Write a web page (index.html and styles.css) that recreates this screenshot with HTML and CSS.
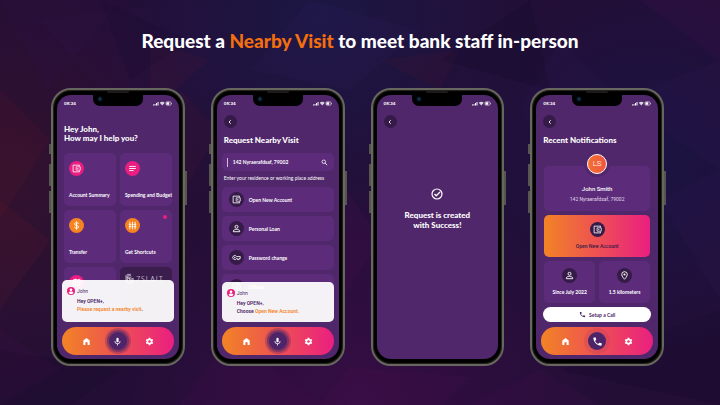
FILE: index.html
```html
<!DOCTYPE html>
<html lang="en">
<head>
<meta charset="utf-8">
<title>Request a Nearby Visit</title>
<link rel="stylesheet" href="styles.css">
</head>
<body>
<svg class="symbols" aria-hidden="true">
  <symbol id="wallet" viewBox="0 0 24 24"><path d="M20 6V3H3v18h17v-3" fill="none" stroke="currentColor" stroke-width="2.200"/><path d="M11 7.500h11v9H11z" fill="none" stroke="currentColor" stroke-width="2"/><circle cx="15.500" cy="12" r="1.600" fill="currentColor"/></symbol>
  <symbol id="lines" viewBox="0 0 24 24"><path d="M3 6.500h18M3 12h18M3 17.500h12" fill="none" stroke="currentColor" stroke-width="2.400"/></symbol>
  <symbol id="dollar" viewBox="0 0 24 24"><path d="M17.500 8C17 5.500 15 4.500 12 4.500S6.800 6 6.800 8.300c0 5 10.700 2.400 10.700 7.400 0 2.300-2.300 3.800-5.500 3.800S6.800 18 6.300 15.500M12 1v22" fill="none" stroke="currentColor" stroke-width="2.600"/></symbol>
  <symbol id="sliders" viewBox="0 0 24 24"><path d="M5 2v20M12 2v20M19 2v20M2 9h6M9 9h6M16 9h6M2 15h6M9 15h6M16 15h6" fill="none" stroke="currentColor" stroke-width="2.400"/></symbol>
  <symbol id="map" viewBox="0 0 24 24"><path d="M3 5l6-2 6 2 6-2v16l-6 2-6-2-6 2zM9 3v16M15 5v16" fill="none" stroke="currentColor" stroke-width="2.400"/></symbol>
  <symbol id="person" viewBox="0 0 24 24"><circle cx="12" cy="7.500" r="4" fill="none" stroke="currentColor" stroke-width="2.400"/><path d="M3.500 20.500v-2c0-2.500 4.500-4 8.500-4s8.500 1.500 8.500 4v2z" fill="none" stroke="currentColor" stroke-width="2.400"/></symbol>
  <symbol id="key" viewBox="0 0 24 24"><path d="M12 9.500A5.300 5.300 0 1 0 12 14.500h2v3h5v-3h3v-5z" fill="none" stroke="currentColor" stroke-width="2.200"/><circle cx="7.500" cy="12" r="1.800" fill="currentColor"/></symbol>
  <symbol id="pin" viewBox="0 0 24 24"><path d="M12 22S4.500 14.500 4.500 9.300a7.500 7.500 0 0 1 15 0C19.500 14.500 12 22 12 22z" fill="none" stroke="currentColor" stroke-width="2.400"/><circle cx="12" cy="9.300" r="2.800" fill="currentColor"/></symbol>
  <symbol id="home" viewBox="0 0 24 24"><path d="M12 2.500L3.500 9.500V21.500H9V14h6v7.500h5.500V9.500z" fill="currentColor"/></symbol>
  <symbol id="mic" viewBox="0 0 24 24"><rect x="9" y="2" width="6" height="12" rx="3" fill="currentColor"/><path d="M5 11a7 7 0 0 0 14 0M12 18v4.500" fill="none" stroke="currentColor" stroke-width="2.200"/></symbol>
  <symbol id="phone" viewBox="0 0 24 24"><path d="M20 15.500c-1.250 0-2.450-.2-3.570-.57-.35-.11-.74-.03-1.020.24l-2.200 2.200a15.050 15.050 0 0 1-6.590-6.580l2.200-2.210c.28-.27.36-.66.250-1.010A11.400 11.400 0 0 1 8.500 4c0-.55-.45-1-1-1H4c-.55 0-1 .45-1 1 0 9.390 7.610 17 17 17 .55 0 1-.45 1-1v-3.500c0-.55-.45-1-1-1z" fill="currentColor"/></symbol>
  <symbol id="gear" viewBox="0 0 24 24"><path fill-rule="evenodd" d="M19.430 12.980c.04-.32.070-.64.070-.98s-.03-.66-.07-.98l2.110-1.650c.19-.15.240-.42.120-.64l-2-3.460c-.12-.22-.39-.3-.61-.22l-2.490 1c-.52-.4-1.080-.73-1.690-.98l-.38-2.650A.488.488 0 0 0 14 2h-4c-.25 0-.46.180-.49.420l-.38 2.650c-.61.250-1.170.590-1.690.980l-2.490-1c-.23-.09-.49 0-.61.220l-2 3.460c-.13.220-.07.490.120.640l2.110 1.650c-.04.320-.07.650-.07.980s.03.660.07.980l-2.110 1.650c-.19.150-.24.420-.12.640l2 3.460c.12.220.39.300.61.220l2.490-1c.52.400 1.080.730 1.690.980l.38 2.650c.03.240.24.420.49.420h4c.25 0 .46-.18.490-.42l.38-2.650c.61-.25 1.170-.59 1.690-.98l2.490 1c.23.090.49 0 .61-.22l2-3.460c.12-.22.070-.49-.12-.64zM12 15.500a3.500 3.500 0 1 1 0-7 3.500 3.500 0 0 1 0 7z" fill="currentColor"/></symbol>
  <symbol id="search" viewBox="0 0 24 24"><circle cx="9.500" cy="9.500" r="6" fill="none" stroke="currentColor" stroke-width="2.600"/><path d="M14 14l7 7" stroke="currentColor" stroke-width="3"/></symbol>
  <symbol id="back" viewBox="0 0 24 24"><path d="M15 5l-7 7 7 7" fill="none" stroke="currentColor" stroke-width="3.600"/></symbol>
  <symbol id="user" viewBox="0 0 24 24"><circle cx="12" cy="12" r="12" fill="#e91e80"/><circle cx="12" cy="8.500" r="4" fill="#fff"/><path d="M4.500 17.500c1-3 4.500-4 7.500-4s6.500 1 7.500 4a9 9 0 0 1-15 0z" fill="#fff"/></symbol>
  <symbol id="check" viewBox="0 0 24 24"><circle cx="12" cy="12" r="10" fill="none" stroke="currentColor" stroke-width="2.400"/><path d="M7 12l3.500 3.500L18 8" fill="none" stroke="currentColor" stroke-width="2.600"/></symbol>
  <symbol id="signals" viewBox="0 0 38 10"><path d="M0 7h2v2H0zM3 6h2v3H3zM6 4h2v5H6zM9 2h2v7H9z" fill="currentColor"/><path d="M13.500 3.500Q18.500-.5 23.500 3.500L18.500 9z" fill="currentColor" opacity=".8"/><rect x="26" y="1.500" width="10" height="7" rx="2" fill="none" stroke="currentColor"/><rect x="27" y="2.500" width="5.500" height="5" fill="currentColor"/><path d="M37 4h1v2h-1z" fill="currentColor"/></symbol>
  <symbol id="hand" viewBox="0 0 24 24"><path d="M4 3h9M3 7l8-3 2 4M2 11l7-3v4l5-3M3 15l6-4 3 6M2 4v14l8 4 6-4M9 14l9-2v6l-6 4M16 12l-2 9M5 7v13" fill="none" stroke="currentColor" stroke-width="1.200"/></symbol>
</svg>

<svg class="facets" viewBox="0 0 720 405" preserveAspectRatio="none" aria-hidden="true">
  <g fill="#4a2c7a">
    <path d="M0 0h120L48 90z" opacity=".08"/><path d="M40 20l150-20 60 70-110 60z" opacity=".07"/>
    <path d="M250 70L310 0l110 30-70 60z" opacity=".12"/><path d="M620 100l100-40v110z" opacity=".12"/>
    <path d="M560 40l60 60-40 90-60-80z" opacity=".1"/><path d="M660 200l60-30v130z" opacity=".12"/>
  </g>
  <g fill="#7a1f2e">
    <path d="M0 90l50 50-50 80z" opacity=".16"/><path d="M150 40l60 20-60 50z" opacity=".14"/>
    <path d="M0 200l50 40-50 70z" opacity=".18"/><path d="M380 60l80-10-20 40z" opacity=".14"/>
    <path d="M180 90l40 40-36 60z" opacity=".12"/>
  </g>
  <g fill="#6a1468">
    <path d="M180 405l50-70 90 70z" opacity=".13"/><path d="M320 405l30-38 120 10-30 28z" opacity=".13"/>
    <path d="M0 330l60 40-60 35z" opacity=".12"/><path d="M470 405l70-36 60 36z" opacity=".12"/>
    <path d="M640 0h80v60z" opacity=".15"/><path d="M340 180l40 60-38 60z" opacity=".15"/>
  </g>
  <g fill="#060418">
    <path d="M0 350l120 20-50 35H0z" opacity=".14"/><path d="M440 60l90-60 20 90z" opacity=".18"/>
    <path d="M560 370l160-60v95z" opacity=".15"/><path d="M100 0l90 40-60 40z" opacity=".12"/>
  </g>
</svg>

<main class="page">
  <h1 class="title">Request a <em>Nearby Visit</em> to meet bank staff in-person</h1>
  <div class="phones">

    <section class="phone" aria-label="Home">
      <div class="notch"></div>
      <div class="screen">
        <div class="status"><span>08:34</span><svg><use href="#signals"/></svg></div>
        <div class="content">
          <h2 class="heading greeting">Hey John,<br>How may I help you?</h2>
          <div class="tiles">
            <a class="tile" href="#"><span class="disc pink"><svg><use href="#wallet"/></svg></span>Account Summary</a>
            <a class="tile" href="#"><span class="disc pink"><svg><use href="#lines"/></svg></span>Spending and Budget</a>
            <a class="tile" href="#"><span class="disc orange"><svg><use href="#dollar"/></svg></span>Transfer</a>
            <a class="tile" href="#"><span class="disc orange"><svg><use href="#sliders"/></svg></span>Get Shortcuts<i class="dot"></i></a>
            <a class="tile" href="#" aria-label="Map"><span class="disc pink"><svg><use href="#map"/></svg></span></a>
            <div class="tile partner"><span class="brand"><svg><use href="#hand"/></svg>7SLAIT</span></div>
          </div>
        </div>
        <div class="dock">
          <div class="chat tall">
            <div class="who"><svg><use href="#user"/></svg>John</div>
            <p>Hey OPEN+,<br><b>Please request a nearby visit</b>.</p>
          </div>
          <nav class="bar">
            <a href="#" aria-label="Home"><svg><use href="#home"/></svg></a>
            <button class="talk" aria-label="Speak"><svg><use href="#mic"/></svg></button>
            <a href="#" aria-label="Settings"><svg><use href="#gear"/></svg></a>
          </nav>
        </div>
      </div>
    </section>

    <section class="phone" aria-label="Request Nearby Visit">
      <div class="notch"></div>
      <div class="screen">
        <div class="status"><span>08:34</span><svg><use href="#signals"/></svg></div>
        <div class="content">
          <button class="back" aria-label="Back"><svg><use href="#back"/></svg></button>
          <h2 class="heading">Request Nearby Visit</h2>
          <div class="search">
            <input id="address" type="text" value="142 Nyraerafdsaf, 79002">
            <svg><use href="#search"/></svg>
          </div>
          <label class="hint" for="address">Enter your residence or working place address</label>
          <div class="list">
            <a class="item" href="#"><span class="disc"><svg><use href="#wallet"/></svg></span>Open New Account</a>
            <a class="item" href="#"><span class="disc"><svg><use href="#person"/></svg></span>Personal Loan</a>
            <a class="item" href="#"><span class="disc"><svg><use href="#key"/></svg></span>Password change</a>
            <a class="item" href="#"><span class="disc"><svg><use href="#wallet"/></svg></span>Others</a>
          </div>
        </div>
        <div class="dock">
          <div class="chat">
            <div class="who"><svg><use href="#user"/></svg>John</div>
            <p>Hey OPEN+,<br>Choose <b>Open New Account.</b></p>
          </div>
          <nav class="bar">
            <a href="#" aria-label="Home"><svg><use href="#home"/></svg></a>
            <button class="talk" aria-label="Speak"><svg><use href="#mic"/></svg></button>
            <a href="#" aria-label="Settings"><svg><use href="#gear"/></svg></a>
          </nav>
        </div>
      </div>
    </section>

    <section class="phone" aria-label="Request created">
      <div class="notch"></div>
      <div class="screen">
        <div class="status"><span>08:34</span><svg><use href="#signals"/></svg></div>
        <div class="content">
          <button class="back" aria-label="Back"><svg><use href="#back"/></svg></button>
          <div class="success">
            <svg><use href="#check"/></svg>
            <p>Request is created<br>with Success!</p>
          </div>
        </div>
      </div>
    </section>

    <section class="phone" aria-label="Recent Notifications">
      <div class="notch"></div>
      <div class="screen">
        <div class="status"><span>08:34</span><svg><use href="#signals"/></svg></div>
        <div class="content">
          <button class="back" aria-label="Back"><svg><use href="#back"/></svg></button>
          <h2 class="heading">Recent Notifications</h2>
          <div class="details">
            <div class="profile">
              <span class="avatar">LS</span>
              <strong>John Smith</strong>
              <span class="place">142 Nyraerafdsaf, 79002</span>
            </div>
            <a class="fact feature" href="#"><span class="disc"><svg><use href="#wallet"/></svg></span>Open New Account</a>
            <div class="fact"><span class="disc"><svg><use href="#person"/></svg></span>Since July 2022</div>
            <div class="fact"><span class="disc"><svg><use href="#pin"/></svg></span>1.5 kilometers</div>
          </div>
        </div>
        <div class="dock">
          <button class="call"><svg><use href="#phone"/></svg>Setup a Call</button>
          <nav class="bar">
            <a href="#" aria-label="Home"><svg><use href="#home"/></svg></a>
            <button class="talk soft" aria-label="Call"><svg><use href="#phone"/></svg></button>
            <a href="#" aria-label="Settings"><svg><use href="#gear"/></svg></a>
          </nav>
        </div>
      </div>
    </section>

  </div>
</main>
</body>
</html>
```
FILE: styles.css
```css
* { box-sizing: border-box; }

body {
  margin: 0;
  min-height: 100vh;
  position: relative;
  overflow: hidden;
  color: #fff;
  font-family: Lato, Roboto, sans-serif;
  background:
    radial-gradient(circle at 45% 5%, rgba(27, 24, 70, .9), transparent 40%),
    radial-gradient(circle at 90% 40%, rgba(26, 20, 68, .9), transparent 30%),
    radial-gradient(circle at 50% 100%, rgba(56, 13, 70, .9), transparent 45%),
    radial-gradient(circle at 0% 45%, rgba(54, 18, 44, .8), transparent 30%),
    #230e36;
}

h1, h2, p { margin: 0; }
a { color: inherit; text-decoration: none; }
button { border: 0; padding: 0; font: inherit; color: inherit; }
svg { display: block; }

.symbols { position: absolute; width: 0; height: 0; }
.facets { position: absolute; inset: 0; width: 100%; height: 100%; opacity: .7; }

.page {
  position: relative;
  padding: 29px 56px 38px 51px;
}

.title {
  font: 900 19px/24px Lato, sans-serif;
  text-align: center;
  white-space: nowrap;
  margin-bottom: 35px;
  padding-left: 5px;
}
.title em { font-style: normal; color: #f36f0e; }

.phones {
  display: grid;
  grid-template-columns: repeat(4, minmax(0, 1fr));
  gap: 26px;
}

.phone {
  position: relative;
  display: grid;
  grid-template: minmax(0, 1fr) / minmax(0, 1fr);
  aspect-ratio: 134 / 279;
  min-height: 0;
  padding: 5px 4px;
  border: 2px solid #67665f;
  border-radius: 20px;
  background: #000;
  box-shadow: inset 0 0 1px 1px #26251f;
}
.phone::before, .phone::after {
  content: "";
  position: absolute;
  width: 2px;
}
.phone::before {
  left: -4px;
  top: 54px;
  height: 69px;
  background: linear-gradient(#56554f 0 10px, transparent 10px 20px, #56554f 20px 42px, transparent 42px 47px, #56554f 47px);
}
.phone::after {
  right: -4px;
  top: 81px;
  height: 34px;
  background: #56554f;
}

.notch {
  position: absolute;
  z-index: 2;
  top: 4px;
  left: 50%;
  width: 50px;
  height: 12px;
  transform: translateX(-50%);
  border-radius: 0 0 7px 7px;
  background:
    radial-gradient(circle at 7px 5px, #0d3358 0 1px, #04101c 2px, transparent 3px),
    #000;
}
.notch::before {
  content: "";
  position: absolute;
  left: 14px;
  right: 14px;
  top: -3px;
  height: 2px;
  border-radius: 1px;
  background: #1b1a1c;
}

.screen {
  position: relative;
  display: flex;
  flex-direction: column;
  overflow: hidden;
  border-radius: 14px;
  background: #50276a;
}

.status {
  display: flex;
  justify-content: space-between;
  align-items: center;
  flex: none;
  height: 16px;
  padding: 0 7px;
  font: 700 4px/5px Inter, sans-serif;
}
.status svg { width: 19px; height: 5px; }

.content {
  flex: 1;
  min-height: 0;
  padding: 4px 5px 0;
}

.heading {
  margin: 8px 2px 0;
  font: 900 8px/9px Lato, sans-serif;
  white-space: nowrap;
}
.greeting { margin-top: 10px; }

.tiles {
  display: grid;
  grid-template-columns: 1fr 1fr;
  grid-auto-rows: 53px;
  gap: 4px;
  margin: 10px 2px 0;
}
.tile {
  position: relative;
  display: flex;
  flex-direction: column;
  gap: 16px;
  min-width: 0;
  padding: 8px 5px;
  border-radius: 5px;
  background: #5c2c7b;
  font-size: 5px;
  line-height: 6px;
  font-weight: 700;
  white-space: nowrap;
}
.partner { background: #3b1d4e; }
.brand {
  display: flex;
  align-items: center;
  font: 300 7px/8px Lato, sans-serif;
  letter-spacing: 1px;
  margin-top: -2px;
}
.brand svg { width: 11px; height: 11px; flex: none; }
.dot {
  position: absolute;
  top: 5px;
  right: 5px;
  width: 4px;
  height: 4px;
  border-radius: 50%;
  background: #e91e80;
}

.disc {
  display: grid;
  place-items: center;
  flex: none;
  width: 15px;
  height: 15px;
  border-radius: 50%;
  background: #361b48;
}
.disc svg { width: 9px; height: 9px; }
.pink { background: #e91e80; }
.orange { background: #f58320; }

.back {
  display: grid;
  place-items: center;
  width: 13px;
  height: 13px;
  margin: 0 2px;
  border-radius: 50%;
  background: #361b48;
}
.back svg { width: 6px; height: 6px; }

.search {
  display: flex;
  align-items: center;
  height: 18px;
  margin-top: 8px;
  padding: 0 6px 0 5px;
  border-radius: 5px;
  background: #5c2c7b;
}
.search input {
  flex: 1;
  min-width: 0;
  height: 9px;
  padding: 0 0 0 5px;
  border: 0;
  border-left: 1px solid #cdbdd8;
  background: none;
  color: #fff;
  font: 700 5px/6px Lato, sans-serif;
  outline: 0;
}
.search svg { width: 7px; height: 7px; }
.hint {
  display: block;
  margin: 4px 2px 6px;
  font-size: 5px;
  line-height: 6px;
  font-weight: 400;
  white-space: nowrap;
}

.list { display: grid; gap: 4px; }
.item {
  display: flex;
  align-items: center;
  gap: 5px;
  height: 25px;
  padding: 0 7px;
  border-radius: 5px;
  background: #5c2c7b;
  font-size: 5px;
  font-weight: 700;
}

.dock {
  position: absolute;
  left: 5px;
  right: 5px;
  bottom: 4px;
  display: grid;
  gap: 5px;
}
.chat {
  height: 40px;
  padding: 7px 5px 0;
  border-radius: 5px;
  background: rgba(255, 255, 255, .94);
  color: #4b2466;
  white-space: nowrap;
}
.tall { height: 42px; }
.who {
  display: flex;
  align-items: center;
  gap: 2px;
  font: 400 5px/8px Roboto, sans-serif;
}
.who svg { width: 8px; height: 8px; }
.chat p {
  margin: 2px 0 0 10px;
  font: 600 5px/8px Roboto, sans-serif;
}
.chat b { font-weight: 600; color: #f4852a; }

.bar {
  display: grid;
  grid-template-columns: repeat(3, 1fr);
  place-items: center;
  height: 28px;
  padding: 0 9px;
  border-radius: 14px;
  background: linear-gradient(90deg, #f28325, #ea1f80);
}
.bar svg { width: 9px; height: 9px; }
.talk {
  display: grid;
  place-items: center;
  width: 18px;
  height: 18px;
  border-radius: 50%;
  background: #4d2468;
  box-shadow: 0 0 0 2px rgba(77, 36, 104, .5), 0 0 0 4px rgba(77, 36, 104, .3);
}
.soft { box-shadow: 0 0 0 4px rgba(77, 36, 104, .1); }
.soft svg { width: 11px; height: 11px; }

.success {
  display: grid;
  justify-items: center;
  padding-top: 60px;
  font: 900 8px/10px Lato, sans-serif;
  text-align: center;
}
.success svg { width: 12px; height: 12px; margin-bottom: 10px; }

.details {
  display: grid;
  grid-template-columns: 1fr 1fr;
  gap: 4px;
  margin: 21px 3px 0;
}
.profile {
  position: relative;
  grid-column: 1 / -1;
  display: grid;
  justify-items: center;
  align-content: start;
  height: 45px;
  padding-top: 19px;
  border-radius: 5px;
  background: #5c2c7b;
}
.profile strong { font: 500 6px/8px Roboto, sans-serif; }
.place {
  margin-top: 3px;
  font: 400 5px/6px Roboto, sans-serif;
  color: #e0d5e8;
}
.avatar {
  position: absolute;
  top: -12px;
  left: 50%;
  transform: translateX(-50%);
  display: grid;
  place-items: center;
  width: 20px;
  height: 20px;
  border: 1px solid #fff;
  border-radius: 50%;
  background: linear-gradient(90deg, #f3702f, #f05542);
  box-shadow: 0 0 0 3px #50276a;
  font: 300 8px/8px Roboto, sans-serif;
}
.fact {
  display: grid;
  justify-items: center;
  align-content: start;
  gap: 6px;
  height: 42px;
  padding-top: 7px;
  border-radius: 5px;
  background: #5c2c7b;
  font-size: 5px;
  line-height: 6px;
  font-weight: 700;
}
.feature {
  grid-column: 1 / -1;
  background: linear-gradient(90deg, #f28325, #ea1f80);
  color: #361b48;
  font: 500 5px/6px Roboto, sans-serif;
}
.feature .disc { color: #fff; }

.call {
  display: flex;
  align-items: center;
  justify-content: center;
  gap: 3px;
  height: 15px;
  margin: 0 2px;
  border-radius: 8px;
  background: #fff;
  color: #4b2466;
  font-size: 5px;
  font-weight: 700;
}
.call svg { width: 7px; height: 7px; }
```
